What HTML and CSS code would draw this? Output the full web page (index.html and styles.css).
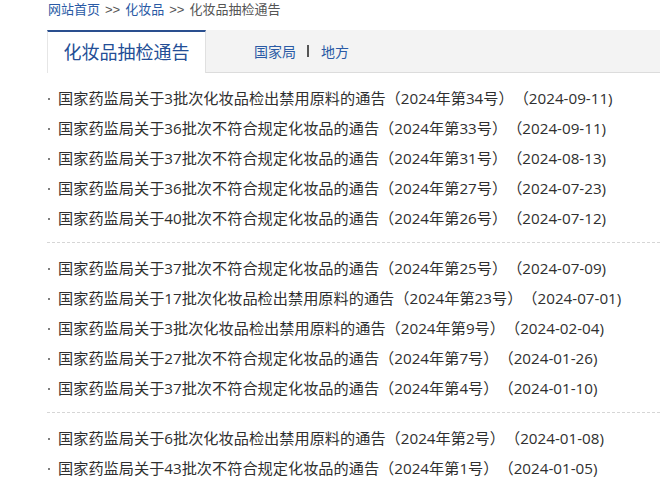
FILE: index.html
```html
<!DOCTYPE html>
<html lang="zh-CN">
<head>
<meta charset="utf-8">
<link rel="stylesheet" href="styles.css">
</head>
<body>
<div class="page">
  <div class="crumb"><a class="link">网站首页</a><span class="arrow">&gt;&gt;</span><a class="link">化妆品</a><span class="arrow">&gt;&gt;</span>化妆品抽检通告</div>
  <div class="tabs">
    <div class="tab-active">化妆品抽检通告</div>
    <div class="tab-links"><a class="link">国家局</a><span class="sep"></span><a class="link">地方</a></div>
  </div>
  <ul class="group">
    <li>国家药监局关于3批次化妆品检出禁用原料的通告（2024年第34号）（2024-09-11)</li>
    <li>国家药监局关于36批次不符合规定化妆品的通告（2024年第33号）（2024-09-11)</li>
    <li>国家药监局关于37批次不符合规定化妆品的通告（2024年第31号）（2024-08-13)</li>
    <li>国家药监局关于36批次不符合规定化妆品的通告（2024年第27号）（2024-07-23)</li>
    <li>国家药监局关于40批次不符合规定化妆品的通告（2024年第26号）（2024-07-12)</li>
  </ul>
  <ul class="group">
    <li>国家药监局关于37批次不符合规定化妆品的通告（2024年第25号）（2024-07-09)</li>
    <li>国家药监局关于17批次化妆品检出禁用原料的通告（2024年第23号）（2024-07-01)</li>
    <li>国家药监局关于3批次化妆品检出禁用原料的通告（2024年第9号）（2024-02-04)</li>
    <li>国家药监局关于27批次不符合规定化妆品的通告（2024年第7号）（2024-01-26)</li>
    <li>国家药监局关于37批次不符合规定化妆品的通告（2024年第4号）（2024-01-10)</li>
  </ul>
  <ul class="group last">
    <li>国家药监局关于6批次化妆品检出禁用原料的通告（2024年第2号）（2024-01-08)</li>
    <li>国家药监局关于43批次不符合规定化妆品的通告（2024年第1号）（2024-01-05)</li>
  </ul>
</div>
</body>
</html>
```
FILE: styles.css
```css
html, body {
  margin: 0;
  padding: 0;
  background: #fff;
}
body {
  font-family: "Noto Sans CJK SC", "Noto Sans", sans-serif;
  color: #333;
  overflow: hidden;
}
.page {
  padding-left: 47px;
}
.crumb {
  font-size: 13px;
  line-height: 18px;
  height: 18px;
  color: #555;
  padding-left: 1px;
  white-space: nowrap;
}
.arrow {
  font-family: "Liberation Sans", sans-serif;
  margin: 0 5px;
  color: #555;
}
.link {
  color: #2a5aa5;
  text-decoration: none;
}
.tabs {
  margin-top: 12px;
  display: flex;
  height: 42px;
  background: #f3f3f3;
  border-bottom: 1px solid #dcdcdc;
}
.tab-active {
  width: 157px;
  background: #fff;
  border-top: 2px solid #2a4f8f;
  border-left: 1px solid #e6e6e6;
  border-right: 1px solid #e0e0e0;
  margin-bottom: -1px;
  color: #234e96;
  font-size: 18px;
  line-height: 39px;
  text-align: center;
}
.tab-links {
  padding-left: 48px;
  font-size: 14px;
  line-height: 42px;
  display: flex;
  align-items: center;
}
.sep {
  width: 2px;
  height: 12px;
  background: #555;
  margin: 0 12px 0 11px;
}
.group {
  list-style: none;
  margin: 0;
  padding: 10px 0 9px;
  border-bottom: 1px dashed #d6d6d6;
}
.group.last {
  border-bottom: none;
}
.group li {
  position: relative;
  padding-left: 11px;
  font-family: "Open Sans", "Noto Sans CJK SC", sans-serif;
  font-size: 15.2px;
  line-height: 30px;
  height: 30px;
  white-space: nowrap;
  text-spacing-trim: space-all;
  color: #2f2f2f;
}
.group li::before {
  content: "";
  position: absolute;
  left: 1px;
  top: 15px;
  width: 2px;
  height: 2px;
  border-radius: 50%;
  background: #555;
}
```
